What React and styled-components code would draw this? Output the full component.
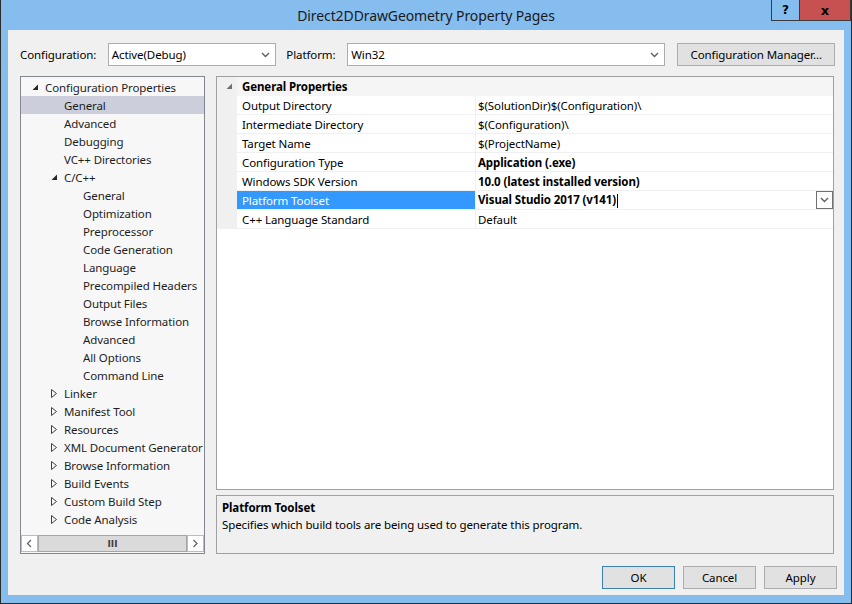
import styled, { createGlobalStyle } from "styled-components";

const GlobalStyle = createGlobalStyle`
  body {
    margin: 0;
    font-family: "Noto Sans", "Liberation Sans", sans-serif;
    font-size: 11.5px;
    letter-spacing: -0.1px;
    color: #000;
  }
`;

const treeItems = [
  { label: "Configuration Properties", level: 0, state: "open" },
  { label: "General", level: 1, selected: true },
  { label: "Advanced", level: 1 },
  { label: "Debugging", level: 1 },
  { label: "VC++ Directories", level: 1 },
  { label: "C/C++", level: 1, state: "open" },
  { label: "General", level: 2 },
  { label: "Optimization", level: 2 },
  { label: "Preprocessor", level: 2 },
  { label: "Code Generation", level: 2 },
  { label: "Language", level: 2 },
  { label: "Precompiled Headers", level: 2 },
  { label: "Output Files", level: 2 },
  { label: "Browse Information", level: 2 },
  { label: "Advanced", level: 2 },
  { label: "All Options", level: 2 },
  { label: "Command Line", level: 2 },
  { label: "Linker", level: 1, state: "closed" },
  { label: "Manifest Tool", level: 1, state: "closed" },
  { label: "Resources", level: 1, state: "closed" },
  { label: "XML Document Generator", level: 1, state: "closed" },
  { label: "Browse Information", level: 1, state: "closed" },
  { label: "Build Events", level: 1, state: "closed" },
  { label: "Custom Build Step", level: 1, state: "closed" },
  { label: "Code Analysis", level: 1, state: "closed" },
];

const props = [
  { name: "Output Directory", value: "$(SolutionDir)$(Configuration)\\" },
  { name: "Intermediate Directory", value: "$(Configuration)\\" },
  { name: "Target Name", value: "$(ProjectName)" },
  { name: "Configuration Type", value: "Application (.exe)", bold: true },
  { name: "Windows SDK Version", value: "10.0 (latest installed version)", bold: true },
  { name: "Platform Toolset", value: "Visual Studio 2017 (v141)", bold: true, selected: true },
  { name: "C++ Language Standard", value: "Default" },
];

function Chevron() {
  return (
    <svg width="9" height="6" viewBox="0 0 9 6">
      <path d="M1 1 L4.5 4.5 L8 1" fill="none" stroke="#606060" strokeWidth="1.4" />
    </svg>
  );
}

function OpenArrow({ color = "#262626" }) {
  return (
    <svg width="7" height="7" viewBox="0 0 7 7">
      <path d="M6 0.5 L6 6 L0.5 6 Z" fill={color} />
    </svg>
  );
}

function ClosedArrow() {
  return (
    <svg width="6" height="9" viewBox="0 0 6 9">
      <path d="M0.5 0.5 L5.5 4.5 L0.5 8.5 Z" fill="none" stroke="#404040" strokeWidth="1" />
    </svg>
  );
}

function ScrollChevron({ dir }) {
  const d = dir === "left" ? "M5 1 L1.5 4.5 L5 8" : "M1.5 1 L5 4.5 L1.5 8";
  return (
    <svg width="7" height="9" viewBox="0 0 7 9">
      <path d={d} fill="none" stroke="#606060" strokeWidth="1.2" />
    </svg>
  );
}

export default function App() {
  return (
    <>
      <GlobalStyle />
      <Window>
        <TitleBar>
          <Title>Direct2DDrawGeometry Property Pages</Title>
          <Caption>
            <HelpButton>?</HelpButton>
            <CloseButton>x</CloseButton>
          </Caption>
        </TitleBar>

        <Client>
          <TopRow>
            <Label $w={88}>Configuration:</Label>
            <Combo $w={169}>
              <span>Active(Debug)</span>
              <Chevron />
            </Combo>
            <Label $w={61} $ml={10}>Platform:</Label>
            <Combo $w={319}>
              <span>Win32</span>
              <Chevron />
            </Combo>
            <PushButton $w={158} $ml={12}>Configuration Manager...</PushButton>
          </TopRow>

          <Main>
            <Tree>
              <TreeList>
                {treeItems.map((item, i) => (
                  <TreeRow key={i} $level={item.level} $selected={item.selected}>
                    <Expander>
                      {item.state === "open" && <OpenArrow />}
                      {item.state === "closed" && <ClosedArrow />}
                    </Expander>
                    {item.label}
                  </TreeRow>
                ))}
              </TreeList>
              <ScrollBar>
                <ScrollArrow>
                  <ScrollChevron dir="left" />
                </ScrollArrow>
                <Thumb>III</Thumb>
                <ScrollArrow>
                  <ScrollChevron dir="right" />
                </ScrollArrow>
              </ScrollBar>
            </Tree>

            <RightColumn>
              <Grid>
                <CategoryRow>
                  <Gutter>
                    <OpenArrow color="#707070" />
                  </Gutter>
                  <CategoryName>General Properties</CategoryName>
                </CategoryRow>
                {props.map((p, i) => (
                  <PropRow key={i}>
                    <Gutter />
                    <PropName $selected={p.selected}>{p.name}</PropName>
                    <PropValue $bold={p.bold}>
                      <span>
                        {p.value}
                        {p.selected && <Caret />}
                      </span>
                      {p.selected && (
                        <DropButton>
                          <Chevron />
                        </DropButton>
                      )}
                    </PropValue>
                  </PropRow>
                ))}
              </Grid>
              <Description>
                <DescTitle>Platform Toolset</DescTitle>
                <div>Specifies which build tools are being used to generate this program.</div>
              </Description>
            </RightColumn>
          </Main>

          <ButtonRow>
            <PushButton $w={73} $default>OK</PushButton>
            <PushButton $w={73}>Cancel</PushButton>
            <PushButton $w={73}>Apply</PushButton>
          </ButtonRow>
        </Client>
      </Window>
    </>
  );
}

const Window = styled.div`
  width: 852px;
  height: 604px;
  box-sizing: border-box;
  background: #86bdef;
  border: 1px solid #2b2b2b;
  border-top: none;
  display: flex;
  flex-direction: column;
`;

const TitleBar = styled.div`
  height: 30px;
  display: grid;
  grid-template-columns: 1fr auto 1fr;
  align-items: start;
`;

const Title = styled.div`
  grid-column: 2;
  font-size: 14px;
  line-height: 32px;
  color: #1a1a1a;
`;

const Caption = styled.div`
  justify-self: end;
  display: flex;
`;

const HelpButton = styled.div`
  width: 27px;
  height: 20px;
  border: 1px solid #3a3a3a;
  border-top: none;
  font-family: "DejaVu Sans", sans-serif;
  font-weight: bold;
  font-size: 12px;
  display: flex;
  align-items: center;
  justify-content: center;
`;

const CloseButton = styled(HelpButton)`
  width: 50px;
  border-left: none;
  background: #c75050;
  font-size: 13px;
`;

const Client = styled.div`
  flex: 1;
  margin: 0 7px 8px 7px;
  background: #f0f0f0;
  display: flex;
  flex-direction: column;
  padding: 13px 7px 0 12px;
`;

const TopRow = styled.div`
  display: flex;
  align-items: center;
  height: 23px;
  margin-right: 2px;
`;

const Label = styled.div`
  width: ${p => p.$w}px;
  margin-left: ${p => p.$ml || 0}px;
`;

const Combo = styled.div`
  width: ${p => p.$w}px;
  height: 23px;
  box-sizing: border-box;
  border: 1px solid #abadb3;
  background: #fff;
  display: flex;
  align-items: center;
  justify-content: space-between;
  padding: 0 5px 0 3px;
`;

const PushButton = styled.div`
  width: ${p => p.$w}px;
  margin-left: ${p => p.$ml || 0}px;
  height: 23px;
  box-sizing: border-box;
  border: 1px solid ${p => (p.$default ? "#3c7fb1" : "#adadad")};
  background: #e1e1e1;
  display: flex;
  align-items: center;
  justify-content: center;
`;

const Main = styled.div`
  display: flex;
  gap: 11px;
  height: 478px;
  margin-top: 10px;
  margin-right: 3px;
`;

const Tree = styled.div`
  width: 185px;
  box-sizing: border-box;
  border: 1px solid #828790;
  background: #f7f7f7;
  display: flex;
  flex-direction: column;
  padding-top: 1px;
  color: #1e1e1e;
`;

const TreeList = styled.div`
  flex: 1;
`;

const TreeRow = styled.div`
  height: 18px;
  display: flex;
  align-items: center;
  padding-left: ${p => 11 + p.$level * 19}px;
  background: ${p => (p.$selected ? "#cccedb" : "transparent")};
  white-space: nowrap;
`;

const Expander = styled.span`
  width: 13px;
  flex-shrink: 0;
  display: flex;
  align-items: center;
`;

const ScrollBar = styled.div`
  height: 17px;
  display: flex;
  background: #e8e8e8;
  margin-bottom: 1px;
`;

const ScrollArrow = styled.div`
  width: 17px;
  box-sizing: border-box;
  border: 1px solid #bcbcbc;
  background: #fff;
  display: flex;
  align-items: center;
  justify-content: center;
`;

const Thumb = styled.div`
  flex: 1;
  box-sizing: border-box;
  border: 1px solid #a6a6a6;
  background: #dadada;
  font-family: "DejaVu Sans", sans-serif;
  font-size: 9px;
  font-weight: bold;
  color: #404040;
  letter-spacing: 0;
  display: flex;
  align-items: center;
  justify-content: center;
`;

const RightColumn = styled.div`
  flex: 1;
  display: flex;
  flex-direction: column;
  gap: 5px;
`;

const Grid = styled.div`
  flex: 1;
  border: 1px solid #a0a0a0;
  background: #fff;
`;

const CategoryRow = styled.div`
  height: 19px;
  display: grid;
  grid-template-columns: 20px 1fr;
  background: #f5f5f5;
`;

const Gutter = styled.div`
  background: #f0f0f0;
  display: flex;
  align-items: center;
  justify-content: flex-end;
  padding-right: 4px;
`;

const CategoryName = styled.div`
  font-weight: bold;
  display: flex;
  align-items: center;
  padding-left: 5px;
`;

const PropRow = styled.div`
  height: 19px;
  box-sizing: border-box;
  display: grid;
  grid-template-columns: 20px 238px 1fr;
  border-bottom: 1px solid #f0f0f0;
`;

const PropName = styled.div`
  display: flex;
  align-items: center;
  padding-left: 5px;
  background: ${p => (p.$selected ? "#3399ff" : "transparent")};
  color: ${p => (p.$selected ? "#fff" : "#000")};
`;

const PropValue = styled.div`
  display: flex;
  align-items: center;
  justify-content: space-between;
  border-left: 1px solid #f0f0f0;
  padding-left: 2px;
  font-weight: ${p => (p.$bold ? "bold" : "normal")};
`;

const Caret = styled.span`
  display: inline-block;
  width: 1px;
  height: 14px;
  background: #000;
  vertical-align: middle;
  margin-left: 1px;
`;

const DropButton = styled.div`
  width: 17px;
  height: 18px;
  box-sizing: border-box;
  border: 1px solid #707070;
  background: #fff;
  display: flex;
  align-items: center;
  justify-content: center;
`;

const Description = styled.div`
  height: 59px;
  box-sizing: border-box;
  border: 1px solid #a0a0a0;
  background: #f0f0f0;
  padding: 3px 5px;
  line-height: 17px;
`;

const DescTitle = styled.div`
  font-weight: bold;
`;

const ButtonRow = styled.div`
  display: flex;
  justify-content: flex-end;
  gap: 8px;
  margin-top: 12px;
`;
